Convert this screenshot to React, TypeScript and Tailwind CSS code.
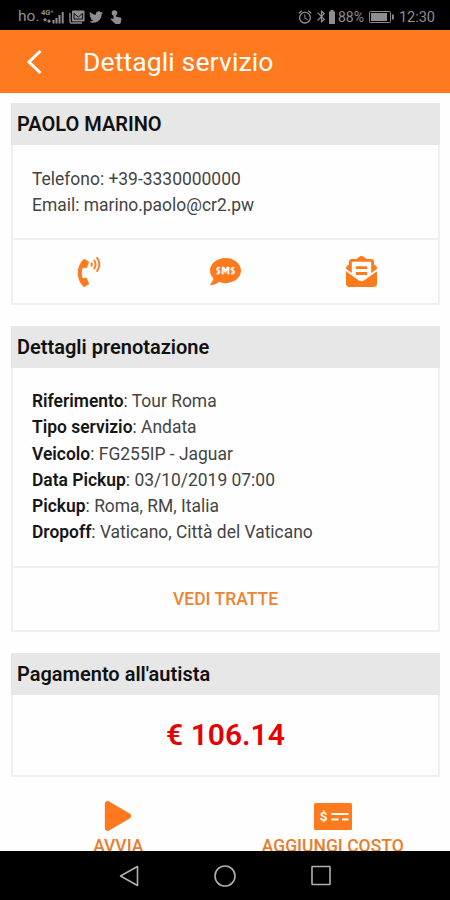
import React from "react";
import {
  FaEnvelopeOpenText,
  FaPhoneVolume,
  FaPlay,
  FaSms,
  FaTwitter,
} from "react-icons/fa";
import { MdAlarm, MdBluetooth } from "react-icons/md";

const booking = [
  { label: "Riferimento", value: "Tour Roma" },
  { label: "Tipo servizio", value: "Andata" },
  { label: "Veicolo", value: "FG255IP - Jaguar" },
  { label: "Data Pickup", value: "03/10/2019 07:00" },
  { label: "Pickup", value: "Roma, RM, Italia" },
  { label: "Dropoff", value: "Vaticano, Città del Vaticano" },
];

const SignalIcon = () => (
  <svg className="ml-[2px] h-[18px] w-[24px]" viewBox="0 0 24 18" fill="#8e8e8e">
    <text x="0" y="7" fontSize="7.5" fontWeight="700" fontFamily="Roboto">
      4G⁺
    </text>
    <path d="M4 10l2.500 2.200H5v1H3v-1H1.500zM8 15l-2.500-2.200H7v-1h2v1h1.500zM11.500 12h2v3.500h-2zM14.500 10h2v5.500h-2zM17.500 7h2v8.500h-2zM20.700 4h2v11.500h-2z" />
  </svg>
);

const MailIcon = () => (
  <svg className="ml-[4px] h-[14px] w-[16px]" viewBox="0 0 16 14" fill="none">
    <path d="M1 3v8.500a1.500 1.500 0 0 0 1.500 1.500H13" stroke="#8e8e8e" strokeWidth="1.400" />
    <rect x="3" y="0.500" width="12.500" height="11" rx="1" fill="#8e8e8e" />
    <path d="M5 3.500l4.300 3.500L13.500 3.500v5.500H5z" stroke="#111" strokeWidth="1" />
  </svg>
);

const TouchIcon = () => (
  <svg className="ml-[7px] h-[14px] w-[12px]" viewBox="0 0 12 14" fill="#8e8e8e">
    <circle cx="4.500" cy="3" r="2.800" />
    <path d="M3.500 2.500h2.200v4l4.300 1c1 .2 1.500.8 1.400 1.800l-.6 3.200c-.1.900-.7 1.400-1.500 1.400H5.500L.5 9.300l.8-.9 2.200.7z" />
  </svg>
);

const MoneyCheckIcon = () => (
  <svg className="h-[27px] w-[38px]" viewBox="0 0 38 27">
    <rect width="38" height="27" rx="1.500" fill="#ff7a1c" />
    <text
      x="9.500"
      y="18"
      textAnchor="middle"
      fontSize="13.500"
      fontWeight="700"
      fontFamily="Roboto"
      fill="#fff"
    >
      $
    </text>
    <path d="M17 11h17.500M17 16.500h7.500M28 16.500h6.500" stroke="#fff" strokeWidth="1.800" />
  </svg>
);

const StatusBar = () => (
  <div className="flex h-[30px] shrink-0 items-center justify-between bg-black pt-[3px] pr-[15px] pl-[18px] text-[#8e8e8e]">
    <div className="flex items-center">
      <span className="text-[15.500px] leading-none">ho.</span>
      <SignalIcon />
      <MailIcon />
      <FaTwitter className="ml-[4px] size-[14px]" />
      <TouchIcon />
    </div>
    <div className="flex items-center leading-none">
      <MdAlarm className="size-[16px]" />
      <MdBluetooth className="ml-[1px] size-[15px]" />
      <svg className="h-[14px] w-[6px]" viewBox="0 0 6 14" fill="#8e8e8e">
        <path d="M1.500 0h3v1.500H6V14H0V1.500h1.500z" />
      </svg>
      <span className="ml-[3px] text-[14px]">88%</span>
      <svg className="ml-[5px] h-[12px] w-[25px]" viewBox="0 0 25 12">
        <rect x="0.500" y="0.500" width="21" height="11" rx="1" fill="none" stroke="#8e8e8e" />
        <rect x="2" y="2" width="16" height="8" fill="#8e8e8e" />
        <path d="M23 3.500h1.800v5H23z" fill="#8e8e8e" />
      </svg>
      <span className="ml-[5px] pt-[3px] text-[14.500px]">12:30</span>
    </div>
  </div>
);

const Card = ({ title, children }: { title: string; children: React.ReactNode }) => (
  <section className="border-x-2 border-b-2 border-[#efefef]">
    <h2 className="-mx-[2px] flex h-[42px] items-center bg-[#e7e7e7] pl-[6px] text-[20px] font-semibold text-[#111]">
      {title}
    </h2>
    {children}
  </section>
);

const NavBar = () => (
  <nav className="flex h-[49px] shrink-0 items-center justify-center gap-[74px] bg-black">
    <svg className="size-[22px]" viewBox="0 0 22 22" fill="none" stroke="#b0b0b0" strokeWidth="1.600">
      <path d="M2.500 11L19.500 1.500v19z" strokeLinejoin="round" />
    </svg>
    <svg className="size-[22px]" viewBox="0 0 22 22" fill="none" stroke="#b0b0b0" strokeWidth="1.600">
      <circle cx="11" cy="11" r="10" />
    </svg>
    <svg className="size-[22px]" viewBox="0 0 22 22" fill="none" stroke="#b0b0b0" strokeWidth="1.600">
      <rect x="2" y="1.500" width="18" height="18" rx="0.500" />
    </svg>
  </nav>
);

const App = () => {
  return (
    <div className="flex h-[900px] w-[450px] flex-col overflow-hidden bg-[#fefefe] font-['Roboto',sans-serif]">
      <StatusBar />
      <header className="flex h-[63px] shrink-0 items-center bg-[#ff7a1f] pl-[26px] text-white">
        <svg className="h-[26px] w-[16px]" viewBox="0 0 16 26" fill="none">
          <path d="M14.500 2L3 13l11.500 11" stroke="#fff" strokeWidth="3" />
        </svg>
        <h1 className="ml-[41px] text-[26.500px] tracking-[0.12px]">Dettagli servizio</h1>
      </header>

      <main className="flex min-h-0 flex-1 flex-col gap-[21px] overflow-hidden pt-[10px] pr-[10px] pl-[11px]">
        <Card title="PAOLO MARINO">
          <div className="h-[93px] pt-[21px] pl-[19px] text-[17.450px] leading-[26.300px] text-[#444]">
            <p>Telefono: +39-3330000000</p>
            <p>Email: marino.paolo@cr2.pw</p>
          </div>
          <div className="flex h-[65px] items-center justify-around border-t-2 border-[#efefef] px-[8px] text-[#ff7a1c]">
            <FaPhoneVolume className="size-[30px]" />
            <FaSms className="ml-[1px] size-[31px]" />
            <FaEnvelopeOpenText className="size-[31px]" />
          </div>
        </Card>

        <Card title="Dettagli prenotazione">
          <div className="h-[198px] pt-[20px] pl-[19px] text-[17.450px] leading-[26.300px] text-[#444]">
            {booking.map((row) => (
              <p key={row.label}>
                <b className="font-semibold text-[#161616]">{row.label}</b>: {row.value}
              </p>
            ))}
          </div>
          <div className="flex h-[64px] items-center justify-center border-t-2 border-[#efefef] text-[17.500px] font-medium text-[#ec8434]">
            VEDI TRATTE
          </div>
        </Card>

        <Card title="Pagamento all'autista">
          <div className="flex h-[80px] items-center justify-center pb-[1px] text-[30px] font-semibold text-[#e60000]">
            € 106.14
          </div>
        </Card>

        <div className="-mt-[1px] flex text-[17.500px] font-medium text-[#e97c2c]">
          <div className="flex w-1/2 flex-col items-center">
            <FaPlay className="mt-[4px] size-[30px] text-[#ff7a1c]" />
            <span className="mt-[2px]">AVVIA</span>
          </div>
          <div className="flex w-1/2 flex-col items-center">
            <div className="mt-[6px] h-[30px]">
              <MoneyCheckIcon />
            </div>
            <span>AGGIUNGI COSTO</span>
          </div>
        </div>
      </main>
      <NavBar />
    </div>
  );
};

export default App;
